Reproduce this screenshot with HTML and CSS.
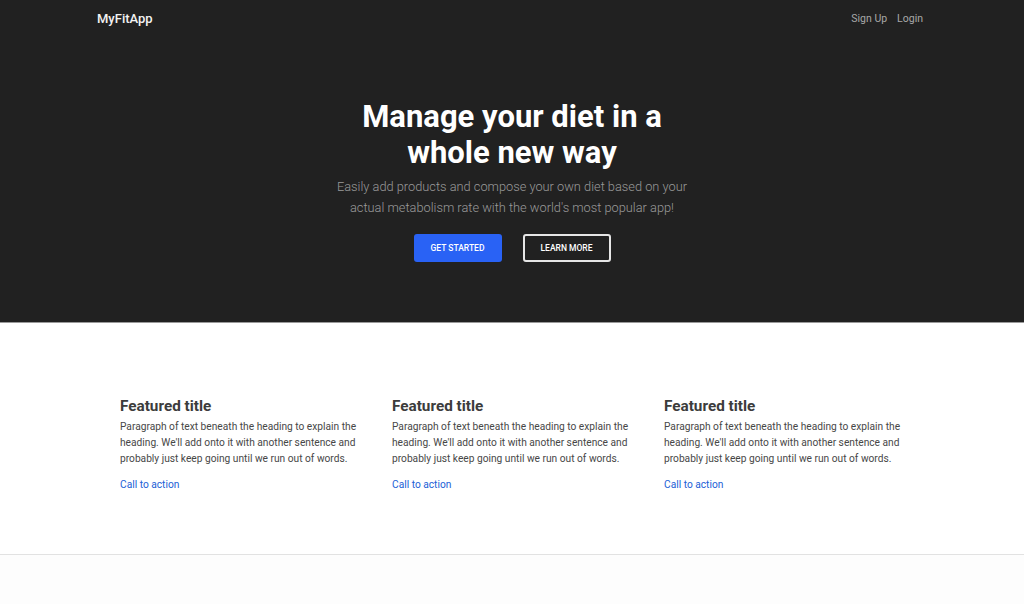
FILE: index.html
```html
<!DOCTYPE html>
<html lang="en">

<head>
    <meta charset="UTF-8">
    <meta name="viewport" content="width=device-width, initial-scale=1.0">
    <title>MyFitApp</title>
    <link rel="stylesheet" href="styles.css">
</head>

<body>
    <header class="hero">
        <nav class="navbar">
            <a href="#" class="logo">MyFitApp</a>
            <div class="nav-links">
                <a href="#">Sign Up</a>
                <a href="#">Login</a>
            </div>
        </nav>

        <div class="hero-content">
            <h1>Manage your diet in a<br>whole new way</h1>
            <p class="subtitle">Easily add products and compose your own diet based on your<br>actual metabolism rate with the world's most popular app!</p>
            <div class="hero-buttons">
                <a href="#" class="btn btn-primary">Get started</a>
                <a href="#" class="btn btn-outline">Learn more</a>
            </div>
        </div>
    </header>

    <section class="features">
        <div class="feature">
            <h2>Featured title</h2>
            <p>Paragraph of text beneath the heading to explain the heading. We'll add onto it with another sentence and probably just keep going until we run out of words.</p>
            <a href="#" class="cta">Call to action</a>
        </div>
        <div class="feature">
            <h2>Featured title</h2>
            <p>Paragraph of text beneath the heading to explain the heading. We'll add onto it with another sentence and probably just keep going until we run out of words.</p>
            <a href="#" class="cta">Call to action</a>
        </div>
        <div class="feature">
            <h2>Featured title</h2>
            <p>Paragraph of text beneath the heading to explain the heading. We'll add onto it with another sentence and probably just keep going until we run out of words.</p>
            <a href="#" class="cta">Call to action</a>
        </div>
    </section>

    <footer class="footer"></footer>
</body>

</html>
```

FILE: styles.css
```css
* {
    box-sizing: border-box;
    margin: 0;
    padding: 0;
}

body {
    font-family: Roboto, 'Liberation Sans', sans-serif;
    background-color: #fdfdfd;
    color: #424242;
}

a {
    text-decoration: none;
}

/* Dark hero with nav on top */
.hero {
    background-color: #212121;
    height: 323px;
    border-bottom: 1px solid #9a9a9a;
}

.navbar {
    display: flex;
    justify-content: space-between;
    align-items: center;
    height: 36px;
    padding: 0 101px 0 97px;
}

.logo {
    color: #f2f2f2;
    font-size: 13px;
    font-weight: 500;
}

.nav-links {
    display: flex;
    gap: 10px;
}

.nav-links a {
    color: #a8a8a8;
    font-size: 10.5px;
}

.hero-content {
    text-align: center;
    padding-top: 63px;
}

h1 {
    color: #fff;
    font-size: 31px;
    font-weight: 700;
    line-height: 36px;
}

.subtitle {
    color: #9a9a9a;
    font-size: 12.8px;
    font-weight: 300;
    line-height: 21px;
    margin-top: 5px;
}

.hero-buttons {
    display: flex;
    justify-content: center;
    gap: 21px;
    margin-top: 16px;
}

.btn {
    display: flex;
    align-items: center;
    justify-content: center;
    width: 88px;
    height: 28px;
    border-radius: 3px;
    font-size: 8.5px;
    font-weight: 500;
    text-transform: uppercase;
    color: #fff;
}

.btn-primary {
    background-color: #2962f5;
}

.btn-outline {
    border: 2px solid #e6e6e6;
}

/* Three column feature row */
.features {
    display: grid;
    grid-template-columns: repeat(3, 240px);
    gap: 32px;
    justify-content: center;
    padding: 74px 0 62px;
    border-bottom: 1px solid #e2e2e2;
    background-color: #fff;
}

.feature h2 {
    font-size: 15.3px;
    font-weight: 700;
    color: #3c3c3c;
    line-height: 18px;
}

.feature p {
    font-size: 10.2px;
    line-height: 16px;
    color: #474747;
    margin-top: 4px;
}

.cta {
    display: inline-block;
    margin-top: 12px;
    font-size: 10.2px;
    color: #2160d6;
}

.footer {
    height: 50px;
}
```
